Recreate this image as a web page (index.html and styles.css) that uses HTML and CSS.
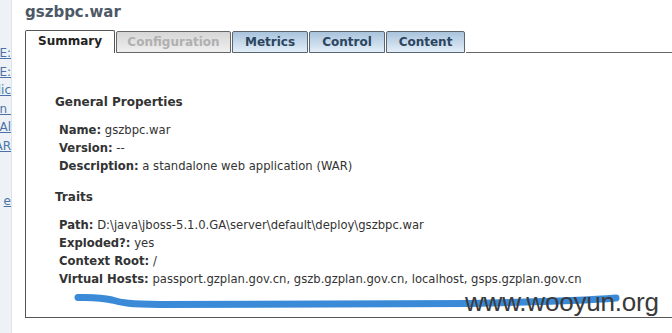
FILE: index.html
```html
<!DOCTYPE html>
<html>
<head>
<meta charset="utf-8">
<link rel="stylesheet" href="styles.css">
</head>
<body>
<div class="page">
  <aside class="sidebar">
    <a class="nav-link l1" href="#">E:</a>
    <a class="nav-link" href="#">E:</a>
    <a class="nav-link" href="#">lic</a>
    <a class="nav-link" href="#">n&nbsp;</a>
    <a class="nav-link" href="#">Al</a>
    <a class="nav-link" href="#">AR</a>
    <a class="nav-link lx" href="#">e</a>
  </aside>
  <main class="main">
    <h1 class="title">gszbpc.war</h1>
    <div class="tabs">
      <div class="tab active">Summary</div>
      <div class="tab disabled">Configuration</div>
      <div class="tab blue t-metrics">Metrics</div>
      <div class="tab blue t-control">Control</div>
      <div class="tab blue t-content">Content</div>
      <div class="tab-fill"></div>
    </div>
    <div class="panel">
      <h2 class="section">General Properties</h2>
      <ul class="props">
        <li><b>Name:</b> gszbpc.war</li>
        <li><b>Version:</b> --</li>
        <li><b>Description:</b> a standalone web application (WAR)</li>
      </ul>
      <h2 class="section">Traits</h2>
      <ul class="props">
        <li><b>Path:</b> D:\java\jboss-5.1.0.GA\server\default\deploy\gszbpc.war</li>
        <li><b>Exploded?:</b> yes</li>
        <li><b>Context Root:</b> /</li>
        <li><b>Virtual Hosts:</b> passport.gzplan.gov.cn, gszb.gzplan.gov.cn, localhost, gsps.gzplan.gov.cn</li>
      </ul>
    </div>
  </main>
  <svg class="stroke" width="672" height="333" viewBox="0 0 672 333">
    <path d="M78 297.5 C95 297, 102 297.5, 112 300 C122 303, 130 304, 160 304.5 L470 303.5 C540 302, 590 300, 616 298" fill="none" stroke="#3a8ad8" stroke-width="7" stroke-linecap="round"/>
  </svg>
  <div class="watermark">www.wooyun.org</div>
</div>
</body>
</html>
```

FILE: styles.css
```css
html, body {
  margin: 0;
  padding: 0;
  background: #ffffff;
}
.page {
  position: relative;
  width: 672px;
  height: 333px;
  overflow: hidden;
  display: flex;
  font-family: "DejaVu Sans", Tahoma, sans-serif;
  color: #333333;
}
.sidebar {
  width: 12px;
  flex: none;
  background: #eef2f6;
  border-right: 1px solid #dde3ea;
  display: flex;
  flex-direction: column;
  align-items: flex-end;
  padding-top: 44px;
  box-sizing: border-box;
  overflow: hidden;
}
.nav-link {
  font-size: 12px;
  line-height: 18.5px;
  color: #4a72a8;
  text-decoration: underline;
  white-space: nowrap;
}
.nav-link.lx {
  margin-top: 37px;
}
.main {
  flex: 1;
  padding-left: 13px;
  padding-top: 2px;
  min-width: 0;
}
.title {
  margin: 0;
  font-size: 15px;
  line-height: 20px;
  font-weight: bold;
  color: #4d5966;
}
.tabs {
  display: flex;
  align-items: flex-end;
  margin-top: 8px;
  height: 23px;
}
.tab {
  height: 22px;
  box-sizing: border-box;
  border: 1px solid #5a6570;
  border-bottom: none;
  border-radius: 2px 2px 0 0;
  font-size: 12px;
  font-weight: bold;
  line-height: 21px;
  text-align: center;
  margin-right: 1px;
}
.tab.active {
  width: 90px;
  height: 23px;
  background: #ffffff;
  color: #222222;
  border-color: #555555;
}
.tab.disabled {
  width: 115px;
  background: linear-gradient(#d6d6d6, #efefef);
  color: #b0b0b0;
  border-color: #666666;
  border-bottom: 1px solid #666666;
}
.tab.blue {
  background: linear-gradient(#a8c3dc, #e3eef8);
  color: #2c4560;
  border-bottom: 1px solid #5a6570;
}
.t-metrics { width: 76px; }
.t-control { width: 76px; }
.t-content { width: 79px; }
.tab-fill {
  flex: 1;
  height: 0;
  border-bottom: 1px solid #666666;
}
.panel {
  border-left: 1px solid #555555;
  border-bottom: 1px solid #555555;
  height: 265px;
  box-sizing: border-box;
  padding: 40px 0 0 29px;
}
.section {
  margin: 0 0 10px 0;
  font-size: 12px;
  line-height: 18px;
  font-weight: bold;
  color: #333333;
}
.props {
  list-style: none;
  margin: 0 0 13px 0;
  padding: 0 0 0 4px;
  font-size: 11.6px;
  line-height: 18px;
  white-space: nowrap;
}
.props b {
  font-weight: bold;
}
.stroke {
  position: absolute;
  left: 0;
  top: 0;
  pointer-events: none;
}
.watermark {
  position: absolute;
  left: 465px;
  top: 287px;
  font-family: "Liberation Sans", Arial, sans-serif;
  font-size: 26px;
  line-height: 30px;
  color: #3a3a3a;
  letter-spacing: -0.2px;
}
```
